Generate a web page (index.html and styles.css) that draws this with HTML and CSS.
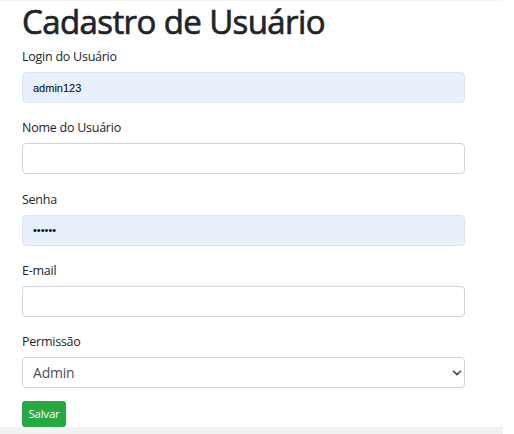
FILE: index.html
```html
<!DOCTYPE html>
<html lang="pt-BR">
<head>
<meta charset="utf-8">
<title>Cadastro de Usuário</title>
<link rel="stylesheet" href="styles.css">
</head>
<body>
<div class="page">
  <div class="content">
    <h1 class="title">Cadastro de Usuário</h1>
    <form class="form">
      <div class="field">
        <label class="label" for="login">Login do Usuário</label>
        <input class="control autofill" id="login" type="text" value="admin123">
      </div>
      <div class="field">
        <label class="label" for="nome">Nome do Usuário</label>
        <input class="control" id="nome" type="text">
      </div>
      <div class="field">
        <label class="label" for="senha">Senha</label>
        <input class="control autofill pass" id="senha" type="password" value="123456">
      </div>
      <div class="field">
        <label class="label" for="email">E-mail</label>
        <input class="control" id="email" type="email">
      </div>
      <div class="field">
        <label class="label" for="perm">Permissão</label>
        <div class="select-wrap">
          <select class="control select" id="perm">
            <option>Admin</option>
            <option>Usuário</option>
          </select>
          <svg class="chevron" width="10" height="6" viewBox="0 0 10 6"><path d="M1.5 1.2 L5 4.6 L8.5 1.2" fill="none" stroke="#444a50" stroke-width="1.6" stroke-linecap="round" stroke-linejoin="round"/></svg>
        </div>
      </div>
      <button class="btn" type="button">Salvar</button>
    </form>
  </div>
  <div class="band"></div>
</div>
</body>
</html>
```
FILE: styles.css
```css
* { box-sizing: border-box; }
html, body { margin: 0; padding: 0; background: #ffffff; }
body {
  font-family: "Open Sans", "Noto Sans", "DejaVu Sans", sans-serif;
  color: #212529;
}
.page {
  width: 503px;
  border-top: 1px solid #f4f4f4;
}
.content {
  padding: 0 0 0 22px;
}
.title {
  margin: 0;
  font-size: 33px;
  line-height: 42px;
  font-weight: 400;
  -webkit-text-stroke: 0.7px #212529;
  color: #212529;
  letter-spacing: -0.6px;
}
.form {
  display: flex;
  flex-direction: column;
  margin-top: 4px;
}
.field {
  display: flex;
  flex-direction: column;
  gap: 5px;
  width: 443px;
  margin-bottom: 15.25px;
}
.field:nth-child(5) { margin-bottom: 13px; }
.label {
  font-size: 12.5px;
  line-height: 20px;
  letter-spacing: -0.25px;
  color: #212529;
}
.control {
  display: block;
  width: 443px;
  height: 31px;
  margin: 0;
  border: 1px solid #ced4da;
  border-radius: 4px;
  background: #ffffff;
  padding: 0 10px;
  font-family: "Open Sans", sans-serif;
  font-size: 14px;
  letter-spacing: -0.2px;
  color: #495057;
  outline: none;
}
.autofill {
  background: #e8f0fe;
  border-color: #dde3ec;
  font-family: "Liberation Sans", Arial, sans-serif;
  font-size: 11px;
  letter-spacing: 0;
  color: #000000;
}
.pass {
  font-size: 11px;
}
.select-wrap {
  position: relative;
  width: 443px;
}
.select {
  -webkit-appearance: none;
  appearance: none;
  padding: 0 30px 0 10px;
  line-height: 29px;
}
.chevron {
  position: absolute;
  right: 3px;
  top: 13px;
}
.btn {
  align-self: flex-start;
  width: 44px;
  height: 26px;
  padding: 0;
  border: none;
  border-radius: 3px;
  background: #28a745;
  color: #ffffff;
  font-family: "Open Sans", sans-serif;
  font-size: 11.5px;
  letter-spacing: -0.2px;
  line-height: 26px;
  text-align: center;
}
.band {
  height: 8px;
  background: #f1f1f1;
}
```
